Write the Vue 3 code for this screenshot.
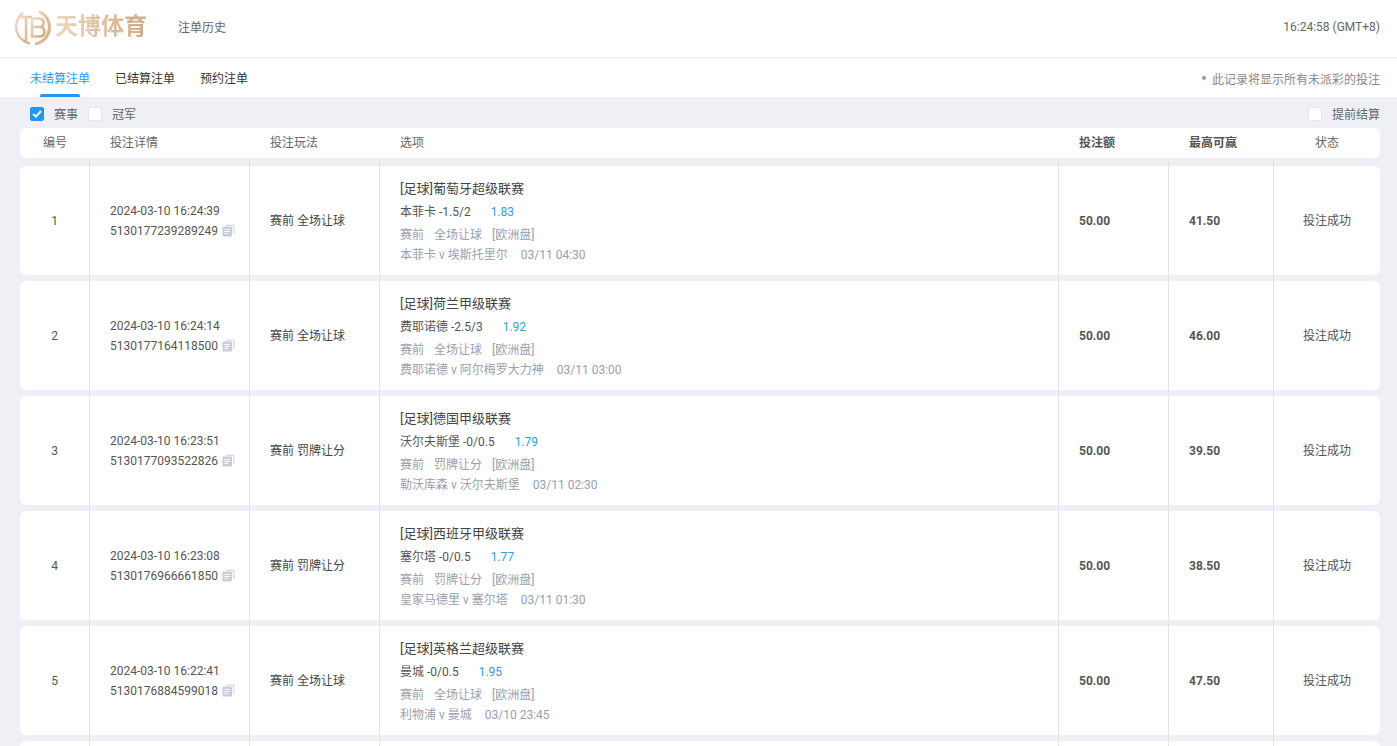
<script setup>
const rows = [
  { no: 1, time: '2024-03-10 16:24:39', id: '5130177239289249', play: '赛前 全场让球', league: '[足球]葡萄牙超级联赛', pick: '本菲卡 -1.5/2', odds: '1.83', market: '全场让球', match: '本菲卡 v 埃斯托里尔', date: '03/11 04:30', win: '41.50' },
  { no: 2, time: '2024-03-10 16:24:14', id: '5130177164118500', play: '赛前 全场让球', league: '[足球]荷兰甲级联赛', pick: '费耶诺德 -2.5/3', odds: '1.92', market: '全场让球', match: '费耶诺德 v 阿尔梅罗大力神', date: '03/11 03:00', win: '46.00' },
  { no: 3, time: '2024-03-10 16:23:51', id: '5130177093522826', play: '赛前 罚牌让分', league: '[足球]德国甲级联赛', pick: '沃尔夫斯堡 -0/0.5', odds: '1.79', market: '罚牌让分', match: '勒沃库森 v 沃尔夫斯堡', date: '03/11 02:30', win: '39.50' },
  { no: 4, time: '2024-03-10 16:23:08', id: '5130176966661850', play: '赛前 罚牌让分', league: '[足球]西班牙甲级联赛', pick: '塞尔塔 -0/0.5', odds: '1.77', market: '罚牌让分', match: '皇家马德里 v 塞尔塔', date: '03/11 01:30', win: '38.50' },
  { no: 5, time: '2024-03-10 16:22:41', id: '5130176884599018', play: '赛前 全场让球', league: '[足球]英格兰超级联赛', pick: '曼城 -0/0.5', odds: '1.95', market: '全场让球', match: '利物浦 v 曼城', date: '03/10 23:45', win: '47.50' }
]
</script>

<template>
  <div class="page">
    <header class="top">
      <div class="logo">
        <svg width="38" height="38" viewBox="0 0 38 38" fill="none">
          <defs>
            <linearGradient id="gold" x1="0" y1="0" x2="1" y2="1">
              <stop offset="0" stop-color="#f0dcc2" />
              <stop offset="1" stop-color="#d2a77a" />
            </linearGradient>
          </defs>
          <path d="M25 3.500A17 17 0 0 1 21 36" stroke="url(#gold)" stroke-width="3" />
          <path d="M16 35.500A17 17 0 0 1 9 5" stroke="url(#gold)" stroke-width="2.200" />
          <path d="M6 9H18M12 9V34" stroke="url(#gold)" stroke-width="2.600" />
          <path d="M18 10.500H25.500C31 10.500 31 19 25.500 19C32 19 32 28.500 25.500 28.500H18ZM18 19H25.500" stroke="url(#gold)" stroke-width="2.600" />
        </svg>
        <span class="brand">天博体育</span>
      </div>
      <span class="hist">注单历史</span>
      <span class="clock">16:24:58 (GMT+8)</span>
    </header>

    <nav class="tabs">
      <a class="tab on">未结算注单</a>
      <a class="tab">已结算注单</a>
      <a class="tab">预约注单</a>
      <span class="note"><i class="dot"></i>此记录将显示所有未派彩的投注</span>
    </nav>

    <main class="body">
      <div class="filters">
        <span class="check on">
          <svg width="10" height="8" viewBox="0 0 10 8" fill="none"><path d="M1 4l3 2.600L9 1" stroke="#fff" stroke-width="2" /></svg>
        </span>
        <span class="flabel">赛事</span>
        <span class="check"></span>
        <span class="flabel">冠军</span>
        <span class="spacer"></span>
        <span class="check"></span>
        <span class="flabel last">提前结算</span>
      </div>

      <div class="grid head">
        <div class="c center">编号</div>
        <div class="c">投注详情</div>
        <div class="c">投注玩法</div>
        <div class="c">选项</div>
        <div class="c strong">投注额</div>
        <div class="c strong">最高可赢</div>
        <div class="c center">状态</div>
      </div>

      <div v-for="r in rows" :key="r.no" class="grid row">
        <div class="c center lines">{{ r.no }}</div>
        <div class="c lines detail">
          <div>{{ r.time }}</div>
          <div class="idline">{{ r.id }}
            <svg class="copy" width="13" height="13" viewBox="0 0 13 13">
              <path d="M4 0.500H12.500V10H11V2H4Z" fill="#dcdfe8" />
              <rect x="0.500" y="2.500" width="9.500" height="10" rx="1" fill="#c9cede" />
              <path d="M2.500 5.500H8M2.500 7.500H8M2.500 9.500H6" stroke="#fff" stroke-width="1" />
            </svg>
          </div>
        </div>
        <div class="c lines play">{{ r.play }}</div>
        <div class="c lines info">
          <div class="league">{{ r.league }}</div>
          <div class="pick">{{ r.pick }}<span class="odds">{{ r.odds }}</span></div>
          <div class="muted"><span class="m1">赛前</span><span class="m1">{{ r.market }}</span><span>[欧洲盘]</span></div>
          <div class="muted">{{ r.match }}<span class="date">{{ r.date }}</span></div>
        </div>
        <div class="c lines strong">50.00</div>
        <div class="c lines strong">{{ r.win }}</div>
        <div class="c center status">投注成功</div>
      </div>

      <div class="grid row">
        <div class="c lines"></div>
        <div class="c lines"></div>
        <div class="c lines"></div>
        <div class="c lines"></div>
        <div class="c lines"></div>
        <div class="c lines"></div>
        <div class="c"></div>
      </div>
    </main>
  </div>
</template>

<style>
html, body { overflow: hidden; height: 746px; }
</style>

<style scoped>
.page {
  width: 1397px;
  height: 746px;
  overflow: hidden;
  background: #fff;
  font-family: Roboto, "Noto Sans CJK SC", sans-serif;
  font-size: 12px;
  color: #555;
}
.top {
  height: 53px;
  display: flex;
  align-items: center;
  padding: 0 17px 4px 14px;
  border-bottom: 2px solid #f1f2f5;
  box-sizing: content-box;
}
.logo { display: flex; align-items: center; width: 164px; }
.brand {
  margin-left: 3px;
  font-size: 23px;
  line-height: 30px;
  font-weight: 700;
  background: linear-gradient(90deg, #ecd7bc, #d0a983);
  -webkit-background-clip: text;
  background-clip: text;
  color: transparent;
}
.hist { color: #666; }
.clock { margin-left: auto; color: #666; }
.tabs {
  height: 38px;
  display: flex;
  align-items: center;
  padding: 0 17px 0 30px;
  gap: 25px;
}
.tab {
  position: relative;
  height: 38px;
  line-height: 40px;
  color: #333;
}
.tab.on { color: #2d9cee; }
.tab.on::after {
  content: "";
  position: absolute;
  left: 10px;
  right: 10px;
  bottom: 0;
  height: 3px;
  border-radius: 2px 2px 0 0;
  background: #2196f3;
}
.note { margin-left: auto; color: #888; display: flex; align-items: center; }
.dot {
  width: 4px;
  height: 4px;
  border-radius: 50%;
  background: #99a;
  margin-right: 6px;
}
.body {
  background: #eff0f5;
  padding: 0 17px 0 20px;
}
.filters {
  box-sizing: border-box;
  height: 31px;
  display: flex;
  align-items: center;
  padding: 2px 0 0 10px;
}
.check {
  box-sizing: border-box;
  width: 14px;
  height: 14px;
  border-radius: 2px;
  background: #fff;
  border: 1px solid #e4e6ec;
  display: flex;
  align-items: center;
  justify-content: center;
}
.check.on { background: #2196f3; border-color: #2196f3; }
.flabel { margin: 0 10px; color: #666; }
.flabel.last { margin-right: 0; }
.spacer { flex: 1; }
.grid {
  display: grid;
  grid-template-columns: 70px 160px 130px 679px 110px 105px 106px;
  background: #fff;
  border-radius: 6px;
}
.head {
  height: 30px;
  margin-bottom: 8px;
  align-items: center;
  color: #666;
}
.head .c { padding-left: 20px; }
.head .center { padding-left: 0; }
.row {
  height: 109px;
  margin-bottom: 6px;
  align-items: stretch;
}
.c {
  box-sizing: border-box;
  padding-left: 20px;
  line-height: 20px;
}
.center { text-align: center; padding-left: 0; }
.strong { font-weight: 700; color: #555; }
.lines {
  position: relative;
  border-right: 1px solid #e2e3e8;
  display: flex;
  flex-direction: column;
  justify-content: center;
}
.lines::before {
  content: "";
  position: absolute;
  top: -6px;
  right: -1px;
  width: 1px;
  height: 6px;
  background: #e4e5ea;
}
.lines.center { align-items: center; }
.detail { line-height: 20px; color: #555; }
.idline { display: flex; align-items: center; gap: 4px; white-space: nowrap; }
.play { color: #444; padding-top: 1px; }
.info { line-height: 20px; padding-top: 2px; }
.league { font-size: 13px; color: #444; line-height: 24px; margin-top: -1px; }
.pick { color: #555; line-height: 20px; margin-bottom: 3px; margin-top: 1px; }
.odds { margin-left: 20px; color: #2d9cee; }
.muted { color: #9aa0ad; line-height: 20px; }
.m1 { margin-right: 10px; }
.date { margin-left: 13px; }
.status { display: flex; align-items: center; justify-content: center; color: #555; }
</style>
